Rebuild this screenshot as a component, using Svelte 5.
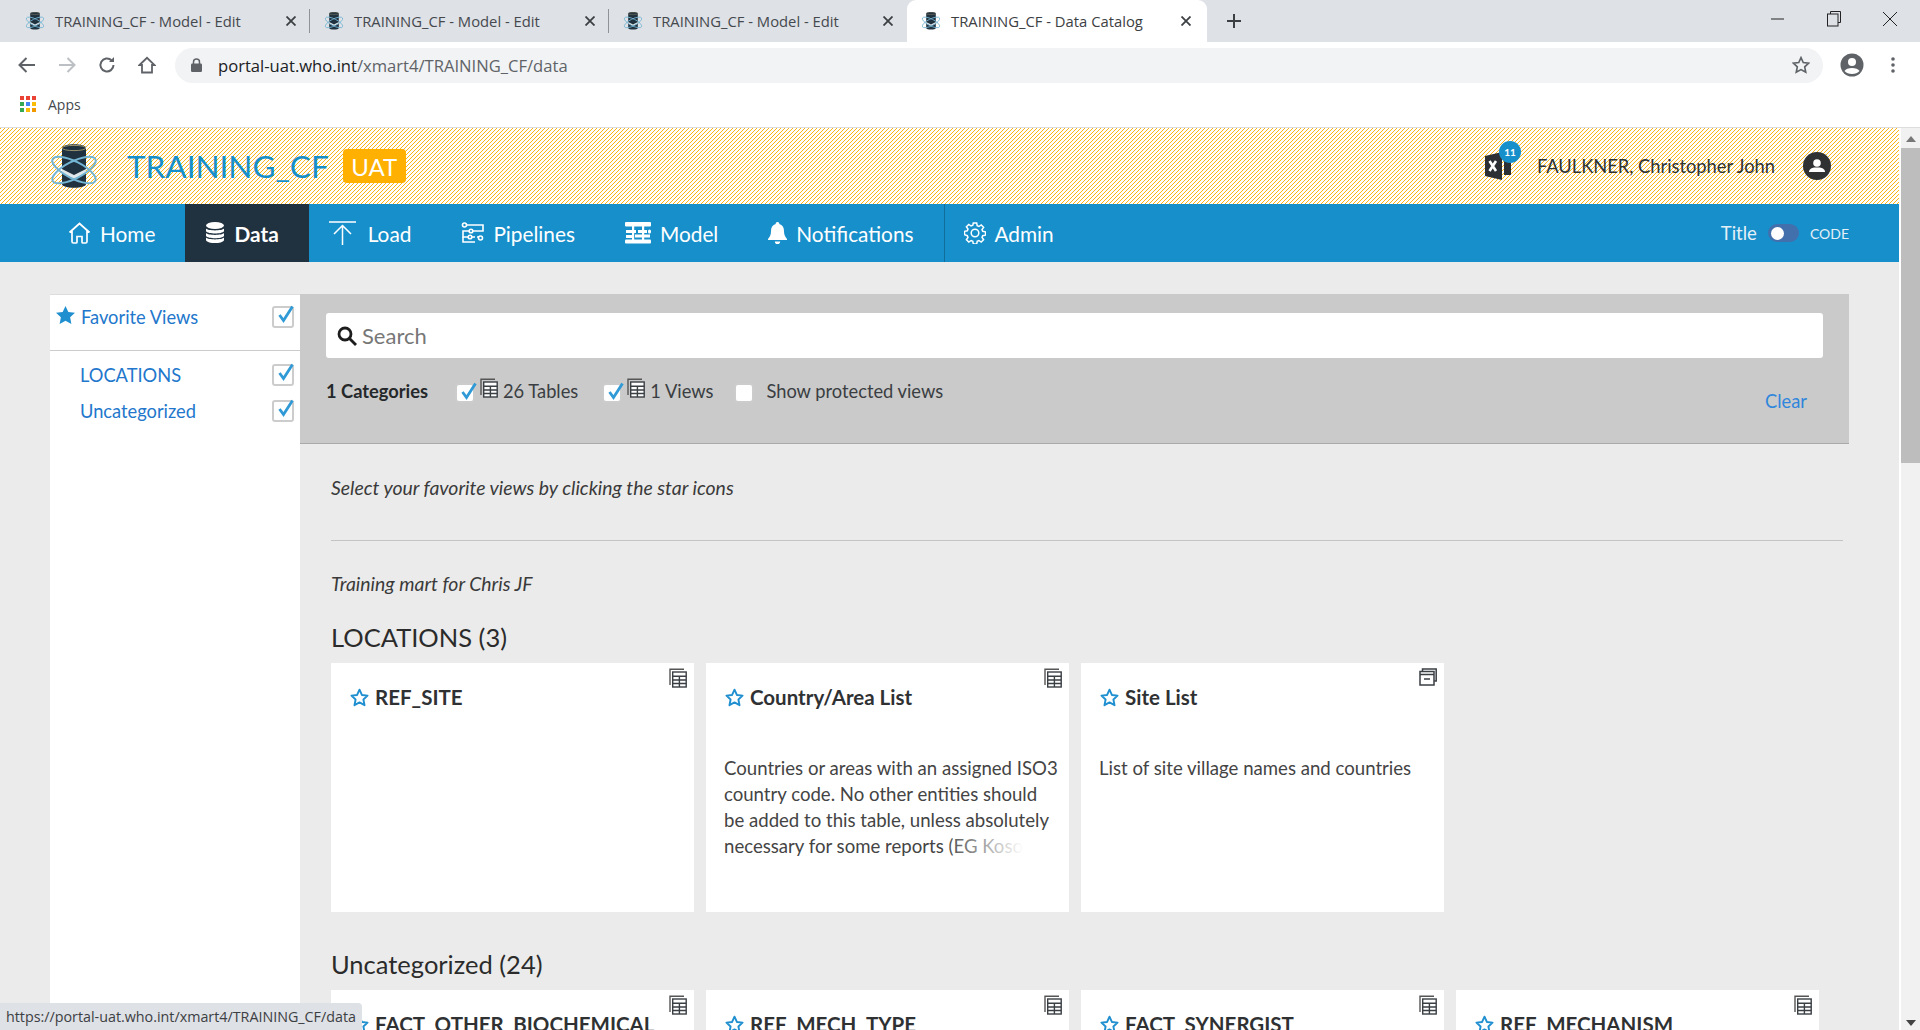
<script lang="ts">
  // xMart data catalog inside a Chrome window.
  const tabs = [
    { title: 'TRAINING_CF - Model - Edit', active: false },
    { title: 'TRAINING_CF - Model - Edit', active: false },
    { title: 'TRAINING_CF - Model - Edit', active: false },
    { title: 'TRAINING_CF - Data Catalog', active: true }
  ];

  const nav = [
    { id: 'home', label: 'Home' },
    { id: 'data', label: 'Data', active: true },
    { id: 'load', label: 'Load' },
    { id: 'pipelines', label: 'Pipelines' },
    { id: 'model', label: 'Model' },
    { id: 'bell', label: 'Notifications' },
    { id: 'gear', label: 'Admin', split: true }
  ];

  const sections = [
    {
      name: 'LOCATIONS (3)',
      cards: [
        { title: 'REF_SITE', kind: 'table', desc: '' },
        {
          title: 'Country/Area List',
          kind: 'table',
          desc: 'Countries or areas with an assigned ISO3 country code. No other entities should be added to this table, unless absolutely necessary for some reports (EG Kosovo)',
          fade: true
        },
        { title: 'Site List', kind: 'view', desc: 'List of site village names and countries' }
      ]
    },
    {
      name: 'Uncategorized (24)',
      cards: [
        { title: 'FACT_OTHER_BIOCHEMICAL', kind: 'table', desc: '' },
        { title: 'REF_MECH_TYPE', kind: 'table', desc: '' },
        { title: 'FACT_SYNERGIST', kind: 'table', desc: '' },
        { title: 'REF_MECHANISM', kind: 'table', desc: '' }
      ]
    }
  ];
</script>

{#snippet logo(size)}
  <svg width={size} height={size * 0.88} viewBox="0 0 50 44">
    <path d="M13 4c0-5 24-5 24 0v36c0 5-24 5-24 0z" fill="#20313f" />
    <ellipse cx="25" cy="4" rx="12" ry="2.600" fill="#20313f" stroke="#b9a97a" stroke-width="0.800" />
    <path d="M13 25l12 6 12-6v4l-12 6-12-6z" fill="#dfe7ea" />
    <ellipse cx="25" cy="26" rx="24" ry="8.500" transform="rotate(27 25 26)" fill="none" stroke="#74b5d3" stroke-width="2" />
    <ellipse cx="25" cy="26" rx="24" ry="8.500" transform="rotate(-27 25 26)" fill="none" stroke="#74b5d3" stroke-width="2" />
  </svg>
{/snippet}

{#snippet check(on)}
  <span class="check">
    {#if on}
      <svg width="20" height="20" viewBox="0 0 20 20"><path d="M4.500 10l4 5.500L17.500 1.500" fill="none" stroke="#2f9ad6" stroke-width="2.800" /></svg>
    {/if}
  </span>
{/snippet}

{#snippet tableIcon()}
  <svg class="kind" width="18" height="20" viewBox="0 0 18 20" fill="none" stroke="#3a3f44" stroke-width="1.400">
    <path d="M1 17V1.200h14" stroke="#555" />
    <rect x="3.700" y="4" width="13.500" height="15" fill="#fff" />
    <path d="M3.700 8.200h13.500M3.700 12h13.500M3.700 15.500h13.500M10.400 8.200V19" />
  </svg>
{/snippet}

{#snippet viewIcon()}
  <svg class="kind" width="18" height="18" viewBox="0 0 18 18" fill="none" stroke="#3a3f44" stroke-width="1.500">
    <path d="M3.500 3V1h13.700v12h-2" />
    <rect x="1" y="3.500" width="14" height="13.500" fill="#fff" />
    <path d="M1 6.500h14M5 11h6" />
  </svg>
{/snippet}

{#snippet starOutline()}
  <svg class="star" width="19" height="19" viewBox="0 0 20 20"><path d="M10 1.800l2.500 5.500 6 .7-4.400 4.100 1.200 6L10 15.100l-5.300 3 1.200-6L1.500 8l6-.7z" fill="none" stroke="#1f8fd0" stroke-width="2" stroke-linejoin="round" /></svg>
{/snippet}

{#snippet navIcon(id)}
  {#if id === 'home'}
    <svg width="23" height="22" viewBox="0 0 23 22" fill="none" stroke="#fff" stroke-width="1.700"><path d="M1.500 10.500L11.500 1.500l10 9M4 9v10.500a1.500 1.500 0 001.500 1.500h2.500a1 1 0 001-1v-5.500h5V20a1 1 0 001 1h2.500a1.500 1.500 0 001.500-1.500V9" /></svg>
  {:else if id === 'data'}
    <svg width="20" height="22" viewBox="0 0 20 22" fill="#fff"><ellipse cx="10" cy="3.500" rx="9" ry="3.500" /><path d="M1 6.500c2 2.500 16 2.500 18 0v2.800c-2 3-16 3-18 0zM1 11c2 2.500 16 2.500 18 0v3c-2 3-16 3-18 0zM1 15.500c2 2.500 16 2.500 18 0v2.700c-2 3.800-16 3.800-18 0z" /></svg>
  {:else if id === 'load'}
    <svg width="27" height="24" viewBox="0 0 27 24" fill="none" stroke="#fff" stroke-width="1.500"><path d="M0 1h27M13.500 24V5M5 13l8.500-8.500L22 13" /></svg>
  {:else if id === 'pipelines'}
    <svg width="23" height="22" viewBox="0 0 23 22" fill="none" stroke="#fff" stroke-width="1.600"><circle cx="3.500" cy="3" r="2" /><path d="M6 3h16v6H12M8 9H2v6h5M11 15h3" /><circle cx="10" cy="9" r="1.800" /><circle cx="9" cy="15" r="1.800" /><path d="M16 15h2" /><circle cx="19.500" cy="16" r="2" /><path d="M14 20H2v-5" /></svg>
  {:else if id === 'model'}
    <svg width="26" height="22" viewBox="0 0 26 22" fill="#fff"><rect x="0" y="0" width="26" height="4.500" rx="1" /><rect x="1" y="8" width="10" height="3" /><rect x="13" y="8" width="9" height="3" /><rect x="23" y="7.500" width="3" height="4" rx="1.500" /><rect x="1" y="13" width="7" height="3" /><rect x="10" y="12.500" width="15" height="3" /><rect x="0" y="17.500" width="26" height="4" rx="1" /><rect x="7" y="3" width="2.200" height="16" /><rect x="17" y="3" width="2.200" height="16" /></svg>
  {:else if id === 'bell'}
    <svg width="19" height="22" viewBox="0 0 19 22" fill="#fff"><path d="M9.500 0a1.800 1.800 0 011.800 2.100C14.500 3 16 5.500 16 9c0 4 1 5.500 3 8v1H0v-1c2-2.500 3-4 3-8 0-3.500 1.500-6 4.700-6.900A1.800 1.800 0 019.500 0zM6.800 19.500h5.400a2.700 2.700 0 01-5.400 0z" /></svg>
  {:else}
    <svg width="22" height="22" viewBox="0 0 22 22" fill="none" stroke="#fff" stroke-width="1.500"><circle cx="11" cy="11" r="3.800" /><path d="M9.300 1h3.400l.5 2.800 1.700.7 2.300-1.600 2.400 2.400-1.600 2.300.7 1.700 2.800.5v3.400l-2.800.5-.7 1.700 1.600 2.300-2.400 2.400-2.300-1.600-1.700.7-.5 2.800H9.300l-.5-2.800-1.700-.7-2.300 1.600-2.400-2.400 1.600-2.300-.7-1.700L.5 12.700V9.300l2.800-.5.7-1.700-1.600-2.300 2.400-2.400 2.300 1.600 1.700-.7z" /></svg>
  {/if}
{/snippet}

<div class="window">
  <div class="tabstrip">
    {#each tabs as t}
      <div class="tab" class:active={t.active}>
        <span class="favicon">{@render logo(20)}</span>
        <span class="tab-title">{t.title}</span>
        <svg class="tab-x" width="10" height="10" viewBox="0 0 10 10"><path d="M0.500 0.500l9 9M9.500 0.500l-9 9" stroke="#3c4043" stroke-width="1.800" /></svg>
      </div>
    {/each}
    <svg class="plus" width="16" height="16" viewBox="0 0 16 16"><path d="M8 1v14M1 8h14" stroke="#3c4043" stroke-width="2" /></svg>
    <div class="win-btns">
      <svg width="14" height="14" viewBox="0 0 14 14"><path d="M0 7h13" stroke="#222" /></svg>
      <svg width="14" height="16" viewBox="0 0 14 16" fill="none" stroke="#222"><path d="M3.500 3V.5h10v11H11" /><rect x="0.500" y="3" width="10.500" height="12" /></svg>
      <svg width="14" height="14" viewBox="0 0 14 14"><path d="M0 0l14 14M14 0L0 14" stroke="#222" /></svg>
    </div>
  </div>

  <div class="toolbar">
    <svg width="18" height="16" viewBox="0 0 18 16" fill="none" stroke="#5f6368" stroke-width="2"><path d="M17 8H2M8.500 1L1.500 8l7 7" /></svg>
    <svg width="18" height="16" viewBox="0 0 18 16" fill="none" stroke="#bcbfc3" stroke-width="2"><path d="M1 8h15M9.500 1l7 7-7 7" /></svg>
    <svg width="18" height="18" viewBox="0 0 18 18" fill="none" stroke="#5f6368" stroke-width="2"><path d="M15.500 9a6.500 6.500 0 11-2-4.700" /><path d="M16 1v5h-5z" fill="#5f6368" stroke="none" /></svg>
    <svg width="18" height="18" viewBox="0 0 18 18" fill="none" stroke="#5f6368" stroke-width="1.800"><path d="M1.500 9L9 1.800 16.500 9H14v7.500H4V9z" /></svg>
    <div class="omnibox">
      <svg width="11" height="14" viewBox="0 0 11 14" fill="#5f6368"><rect y="5.500" width="11" height="8.500" rx="1.200" /><path d="M2.500 6V4a3 3 0 016 0v2" fill="none" stroke="#5f6368" stroke-width="1.500" /></svg>
      <span class="url"><b>portal-uat.who.int</b>/xmart4/TRAINING_CF/data</span>
      <svg class="omni-star" width="18" height="18" viewBox="0 0 20 20"><path d="M10 1.800l2.500 5.500 6 .7-4.400 4.100 1.200 6L10 15.100l-5.300 3 1.200-6L1.500 8l6-.7z" fill="none" stroke="#5f6368" stroke-width="1.800" /></svg>
    </div>
    <svg class="profile" width="24" height="24" viewBox="0 0 24 24"><circle cx="12" cy="12" r="11.500" fill="#5f6368" /><circle cx="12" cy="9" r="4" fill="#fff" /><path d="M4.500 18c2-4 13-4 15 0-3 4-12 4-15 0z" fill="#fff" /></svg>
    <svg class="kebab" width="4" height="18" viewBox="0 0 4 18" fill="#5f6368"><circle cx="2" cy="3" r="1.800" /><circle cx="2" cy="9" r="1.800" /><circle cx="2" cy="15" r="1.800" /></svg>
  </div>

  <div class="bookmarks">
    <svg width="16" height="16" viewBox="0 0 16 16">
      <g fill="#ea4335"><rect width="4" height="4" /><rect x="6" width="4" height="4" /><rect x="12" width="4" height="4" /></g>
      <g><rect y="6" width="4" height="4" fill="#34a853" /><rect x="6" y="6" width="4" height="4" fill="#4285f4" /><rect x="12" y="6" width="4" height="4" fill="#fbbc05" /></g>
      <g><rect y="12" width="4" height="4" fill="#34a853" /><rect x="6" y="12" width="4" height="4" fill="#fbbc05" /><rect x="12" y="12" width="4" height="4" fill="#f29900" /></g>
    </svg>
    <span>Apps</span>
  </div>

  <div class="browser-view">
    <div class="page">
      <header class="banner">
        <div class="brand">
          <span class="brand-logo">{@render logo(50)}</span>
          <span class="brand-name">TRAINING_CF</span>
          <span class="uat">UAT</span>
        </div>
        <div class="user">
          <span class="xl">
            <svg width="28" height="28" viewBox="0 0 28 28"><path d="M0 4l17-4v28L0 24z" fill="#2c2f33" /><path d="M19 6h7v17h-7z" fill="#2c2f33" /><path d="M4.500 9l6.500 10M11 9l-6.500 10" stroke="#fff" stroke-width="2.600" /></svg>
            <span class="count">11</span>
          </span>
          <span class="user-name">FAULKNER, Christopher John</span>
          <span class="avatar">
            <svg width="16" height="14" viewBox="0 0 16 14" fill="#fff"><circle cx="8" cy="4" r="3.800" /><path d="M0 13c0-3 3-4 5-4.500h6c2 .5 5 1.500 5 4.500z" /></svg>
          </span>
        </div>
      </header>

      <nav class="nav">
        {#each nav as n}
          <a class="nav-item" class:active={n.active} class:split={n.split} href="#top">
            {@render navIcon(n.id)}
            <span>{n.label}</span>
          </a>
        {/each}
        <div class="display-mode">
          <span class="mode-title">Title</span>
          <span class="switch"><i></i></span>
          <span class="mode-code">CODE</span>
        </div>
      </nav>

      <div class="catalog">
        <aside class="side">
          <div class="side-head">
            <svg width="19" height="18" viewBox="0 0 20 19" fill="#1f8fd0"><path d="M10 0l3 6.300 7 .9-5.100 4.800 1.300 7L10 15.600 3.800 19l1.300-7L0 7.200l7-.9z" /></svg>
            <span>Favorite Views</span>
            {@render check(true)}
          </div>
          <div class="side-list">
            <div class="side-row"><span>LOCATIONS</span>{@render check(true)}</div>
            <div class="side-row"><span>Uncategorized</span>{@render check(true)}</div>
          </div>
        </aside>

        <main class="main">
          <section class="filters">
            <div class="search">
              <svg width="20" height="20" viewBox="0 0 20 20" fill="none" stroke="#1d1d1d" stroke-width="2.800"><circle cx="8" cy="8" r="6" /><path d="M12.500 12.500L19 19" /></svg>
              <span>Search</span>
            </div>
            <div class="filter-row">
              <b class="cat-count">1 Categories</b>
              <span class="opt">{@render check(true)}{@render tableIcon()}<span>26 Tables</span></span>
              <span class="opt">{@render check(true)}{@render tableIcon()}<span>1 Views</span></span>
              <span class="opt protected">{@render check(false)}<span>Show protected views</span></span>
              <a class="clear" href="#top">Clear</a>
            </div>
          </section>

          <div class="list">
            <p class="hint">Select your favorite views by clicking the star icons</p>
            <hr />
            <p class="mart">Training mart for Chris JF</p>
            {#each sections as s}
              <h2>{s.name}</h2>
              <div class="cards">
                {#each s.cards as c}
                  <article class="card">
                    <span class="card-kind">
                      {#if c.kind === 'table'}{@render tableIcon()}{:else}{@render viewIcon()}{/if}
                    </span>
                    <h3>{@render starOutline()}<span>{c.title}</span></h3>
                    {#if c.desc}
                      <p class="desc" class:fade={c.fade}>{c.desc}</p>
                    {/if}
                  </article>
                {/each}
              </div>
            {/each}
          </div>
        </main>
      </div>
    </div>

    <div class="scrollbar">
      <svg width="10" height="6" viewBox="0 0 10 6" fill="#777"><path d="M5 0l5 6H0z" /></svg>
      <div class="thumb"></div>
      <svg class="down" width="10" height="6" viewBox="0 0 10 6" fill="#444"><path d="M5 6L0 0h10z" /></svg>
    </div>

    <div class="status">https://portal-uat.who.int/xmart4/TRAINING_CF/data</div>
  </div>
</div>

<style>
  :global(body) {
    margin: 0;
    overflow: hidden;
    background: #fff;
  }
  .window {
    height: 1030px;
    display: flex;
    flex-direction: column;
    overflow: hidden;
    font-family: Lato, 'Open Sans', sans-serif;
    color: #333;
  }

  /* browser chrome */
  .tabstrip {
    height: 42px;
    flex: none;
    background: #dee1e6;
    display: flex;
    align-items: stretch;
    font-family: 'Open Sans', sans-serif;
  }
  .tab {
    width: 299px;
    box-sizing: border-box;
    padding: 0 14px 0 14px;
    display: flex;
    align-items: center;
    gap: 10px;
    font-size: 14.8px;
    color: #45494e;
    position: relative;
  }
  .tab:first-child {
    width: 310px;
    padding-left: 25px;
  }
  .tab:not(.active):not(:nth-child(3))::after {
    content: '';
    position: absolute;
    right: 0;
    top: 9px;
    bottom: 9px;
    width: 1px;
    background: #8f9296;
  }
  .tab:nth-child(3) {
    width: 298px;
  }
  .tab.active {
    background: #fff;
    border-radius: 9px 9px 0 0;
    width: 300px;
    padding-right: 16px;
    color: #3c4043;
  }
  .favicon {
    display: flex;
    flex: none;
  }
  .tab-title {
    flex: 1;
    white-space: nowrap;
  }
  .plus {
    align-self: center;
    margin-left: 19px;
  }
  .win-btns {
    margin-left: auto;
    display: flex;
    align-items: center;
    gap: 42px;
    padding: 0 23px 5px 0;
  }
  .toolbar {
    height: 46px;
    flex: none;
    display: flex;
    align-items: center;
    gap: 22px;
    padding: 0 25px 0 18px;
    box-sizing: border-box;
  }
  .toolbar .kebab {
    margin-left: 5px;
  }
  .omnibox {
    flex: 1;
    height: 35px;
    margin-left: -3px;
    margin-right: -5px;
    background: #f1f3f4;
    border-radius: 18px;
    display: flex;
    align-items: center;
    padding: 0 13px 0 16px;
    gap: 16px;
  }
  .url {
    font-family: 'Open Sans', sans-serif;
    font-size: 16.6px;
    color: #5f6368;
  }
  .url b {
    font-weight: 400;
    color: #202124;
  }
  .omni-star {
    margin-left: auto;
  }
  .bookmarks {
    height: 39px;
    flex: none;
    display: flex;
    align-items: center;
    gap: 12px;
    padding: 0 0 7px 20px;
    font-family: 'Open Sans', sans-serif;
    font-size: 14px;
    color: #45494e;
    box-sizing: border-box;
  }
  .browser-view {
    flex: 1;
    min-height: 0;
    display: flex;
    position: relative;
    border-top: 1px solid #ddd;
  }
  .page {
    flex: 1;
    min-width: 0;
    background: #ebebeb;
    overflow: hidden;
  }
  .scrollbar {
    width: 21px;
    flex: none;
    background: #f1f1f1;
    border-left: 2px solid #fff;
    box-sizing: border-box;
    display: flex;
    flex-direction: column;
    align-items: center;
    padding-top: 8px;
  }
  .thumb {
    width: 100%;
    height: 315px;
    margin-top: 6px;
    background: #bdbdbd;
  }
  .down {
    margin-top: auto;
    margin-bottom: 4px;
  }
  .status {
    position: absolute;
    left: 0;
    bottom: 0;
    height: 27px;
    padding: 0 6px;
    line-height: 27px;
    background: #dee1e6;
    border-top-right-radius: 4px;
    font-family: 'Open Sans', sans-serif;
    font-size: 14.3px;
    color: #3c4043;
  }

  /* app header */
  .banner {
    height: 76px;
    display: flex;
    align-items: center;
    justify-content: space-between;
    padding: 0 68px 0 49px;
    background: linear-gradient(135deg, #fdb515 16%, #fff 16% 50%, #fdb515 50% 66%, #fff 66%) 0 0 / 4px 4px;
  }
  .brand {
    display: flex;
    align-items: center;
  }
  .brand-logo {
    display: flex;
    margin-right: 28px;
  }
  .brand-name {
    font-size: 31.5px;
    font-weight: 400;
    color: #178fcb;
  }
  .uat {
    margin-left: 14px;
    width: 63px;
    height: 34px;
    line-height: 36px;
    text-align: center;
    background: #ffb000;
    border-radius: 4px;
    color: #fff;
    font-size: 24px;
  }
  .user {
    display: flex;
    align-items: center;
  }
  .xl {
    position: relative;
    display: flex;
    margin-right: 24px;
  }
  .count {
    position: absolute;
    left: 14px;
    top: -11px;
    width: 22px;
    height: 22px;
    border-radius: 50%;
    background: #178fcb;
    color: #fff;
    font-size: 10px;
    font-weight: 700;
    line-height: 22px;
    text-align: center;
  }
  .user-name {
    font-size: 18.3px;
    color: #2e3338;
  }
  .avatar {
    margin-left: 28px;
    width: 28px;
    height: 28px;
    border-radius: 50%;
    background: #2f3133;
    display: flex;
    align-items: center;
    justify-content: center;
  }

  /* nav */
  .nav {
    height: 58px;
    display: flex;
    align-items: stretch;
    background: #178fcb;
    padding-left: 48px;
    font-size: 20.8px;
  }
  .nav-item {
    display: flex;
    align-items: center;
    gap: 9px;
    padding: 0 30px 0 20px;
    color: #fff;
    text-decoration: none;
  }
  .nav-item:nth-child(3) {
    gap: 12px;
  }
  .nav-item.active {
    background: #20313f;
    font-weight: 700;
  }
  .nav-item.split {
    border-left: 1px solid #126d9c;
    padding-left: 19px;
  }
  .display-mode {
    margin-left: auto;
    display: flex;
    align-items: center;
    padding-right: 50px;
    color: #e4f0f7;
  }
  .mode-title {
    font-size: 18.5px;
  }
  .switch {
    width: 31px;
    height: 18px;
    margin: 0 11px;
    border-radius: 9px;
    background: #4270ad;
    display: flex;
    align-items: center;
    padding-left: 3px;
    box-sizing: border-box;
  }
  .switch i {
    width: 13px;
    height: 13px;
    border-radius: 50%;
    background: #fff;
  }
  .mode-code {
    font-size: 14px;
  }

  /* catalog */
  .catalog {
    display: flex;
    align-items: stretch;
    margin: 32px 50px 0;
    min-height: 900px;
  }
  .side {
    width: 250px;
    flex: none;
    background: #fff;
    border-top: 1px solid #ddd;
    font-size: 18.3px;
    color: #2277cc;
    box-sizing: border-box;
  }
  .side-head {
    height: 44px;
    display: flex;
    align-items: flex-start;
    gap: 6px;
    padding: 11px 6px 0 6px;
    border-bottom: 1px solid #ccc;
    box-sizing: content-box;
  }
  .side-head .check,
  .side-row .check {
    margin-left: auto;
  }
  .side-list {
    padding: 6px 6px 0 30px;
  }
  .side-row {
    display: flex;
    align-items: center;
    height: 36px;
  }
  .check {
    display: inline-block;
    width: 18px;
    height: 18px;
    flex: none;
    background: #fff;
    border: 2px solid #ccc;
    border-radius: 3px;
    position: relative;
  }
  .check svg {
    position: absolute;
    left: 1px;
    top: -3px;
  }
  .main {
    flex: 1;
    min-width: 0;
  }
  .filters {
    height: 150px;
    box-sizing: border-box;
    background: #cacaca;
    border-bottom: 1px solid #aaa;
    padding: 19px 26px 0;
  }
  .search {
    height: 45px;
    background: #fff;
    border-radius: 3px;
    display: flex;
    align-items: center;
    gap: 5px;
    padding-left: 11px;
    font-size: 22px;
    color: #777;
  }
  .filter-row {
    display: flex;
    align-items: flex-start;
    margin-top: 22px;
    font-size: 18.3px;
    color: #3a3e42;
  }
  .cat-count {
    font-weight: 700;
    width: 129px;
    color: #25282b;
  }
  .opt {
    display: flex;
    align-items: flex-start;
    gap: 5px;
    margin-right: 24px;
  }
  .opt .check {
    margin-top: 3px;
    width: 16px;
    height: 16px;
    border-radius: 4px;
  }
  .opt .kind {
    margin-top: -2px;
  }
  .protected {
    gap: 12px;
    margin-left: -3px;
  }
  .clear {
    margin-left: auto;
    margin-top: 10px;
    margin-right: 16px;
    color: #2f86dc;
    text-decoration: none;
  }
  .list {
    padding: 33px 6px 0 31px;
  }
  p {
    margin: 0;
  }
  .hint,
  .mart {
    font-size: 19.4px;
    font-style: italic;
    color: #3a3a3a;
    line-height: 22px;
  }
  hr {
    border: 0;
    border-top: 1px solid #c4c4c4;
    margin: 41px 0 0;
  }
  .mart {
    margin-top: 32px;
  }
  h2 {
    margin: 27px 0 11px;
    font-size: 25.5px;
    font-weight: 400;
    line-height: 30px;
    color: #2b2b2b;
  }
  .cards {
    display: flex;
    gap: 12px;
  }
  .cards + h2 {
    margin-top: 37px;
  }
  .card {
    width: 363px;
    height: 249px;
    box-sizing: border-box;
    padding: 22px 18px 0;
    background: #fff;
    position: relative;
  }
  .card-kind {
    position: absolute;
    top: 5px;
    right: 7px;
  }
  h3 {
    margin: 0;
    display: flex;
    align-items: center;
    gap: 6px;
    font-size: 20.5px;
    font-weight: 700;
    color: #2f3133;
  }
  .star {
    margin-left: 1px;
  }
  .desc {
    margin: 46px -10px 0 0;
    max-height: 104px;
    overflow: hidden;
    font-size: 18.6px;
    line-height: 26px;
    color: #444;
    position: relative;
  }
  .desc.fade::after {
    content: '';
    position: absolute;
    right: 0;
    bottom: 0;
    width: 118px;
    height: 26px;
    background: linear-gradient(90deg, rgba(255, 255, 255, 0), #fff 68%);
  }
</style>
